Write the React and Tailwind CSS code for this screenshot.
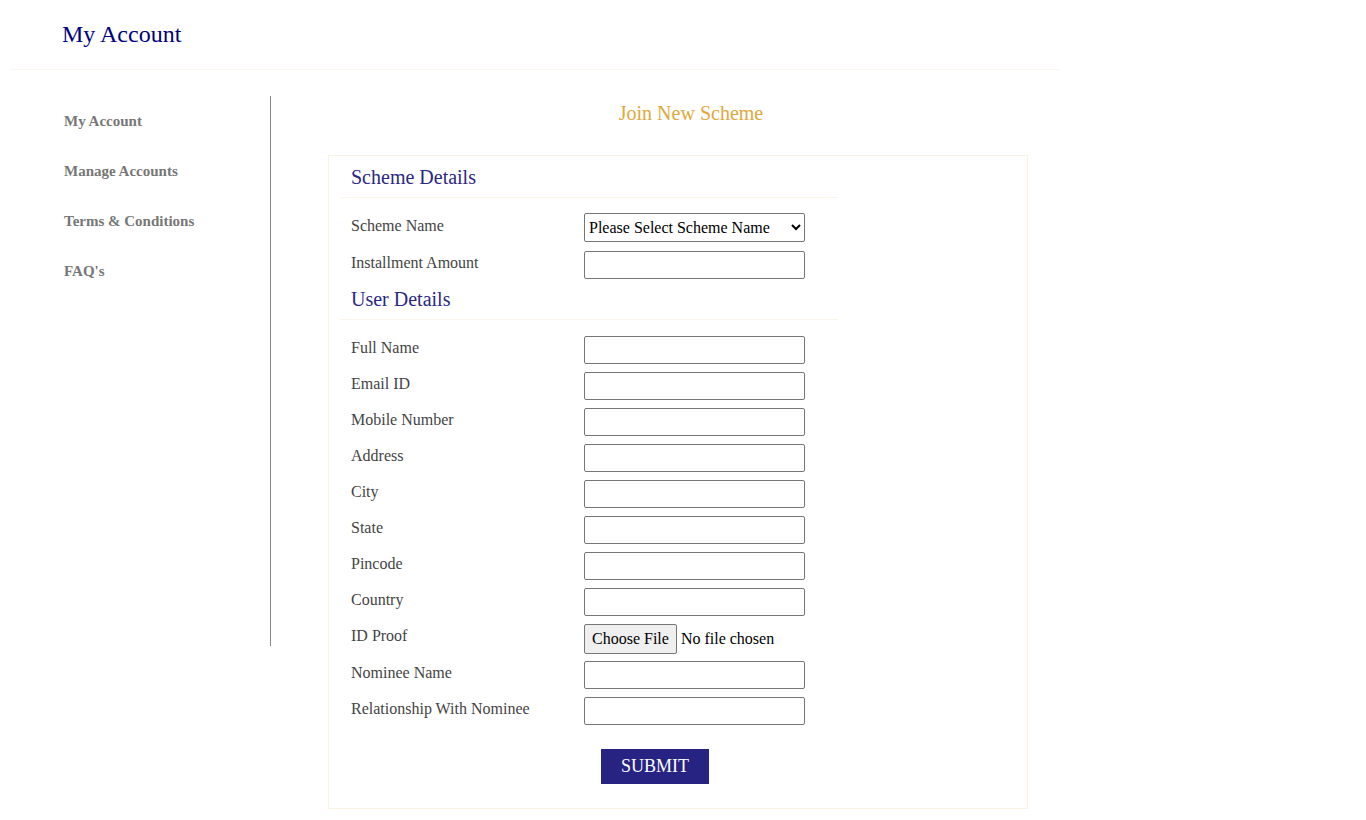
const schemeFields = ['Installment Amount'];
const userFields = [
  'Full Name',
  'Email ID',
  'Mobile Number',
  'Address',
  'City',
  'State',
  'Pincode',
  'Country',
];

function Row({ label, children }) {
  return (
    <div className="flex items-start h-[36px]">
      <label className="w-[244px] pl-[11px] text-[16px] leading-[24px] text-[#444]">{label}</label>
      {children}
    </div>
  );
}

function TextInput() {
  return (
    <input
      type="text"
      className="w-[221px] h-[28px] border border-[#767676] rounded-[2px] bg-white px-1 text-[16px] outline-none"
    />
  );
}

function Heading({ children }) {
  return (
    <div className="border-b border-[#fbf4e8] w-[498px] pl-[11px] pb-[8px] mb-[16px]">
      <h3 className="text-[20px] text-[#2b2783] leading-[24px]">{children}</h3>
    </div>
  );
}

export default function App() {
  return (
    <div className="min-h-screen bg-white font-['Liberation_Serif','Times_New_Roman',serif]">
      <div className="w-[1050px] ml-[10px]">
        {/* Header */}
        <div className="h-[70px] border-b border-[#fbf6ec] pl-[52px] pt-[18px]">
          <h1 className="text-[24px] leading-[32px] text-[#000080]">My Account</h1>
        </div>

        <div className="flex mt-[26px]">
          {/* Sidebar */}
          <nav className="w-[261px] h-[550px] border-r border-[#888] pl-[54px] pt-[15px] flex flex-col gap-[30px]">
            {['My Account', 'Manage Accounts', 'Terms & Conditions', "FAQ's"].map((item) => (
              <a key={item} href="#" className="text-[15px] leading-[20px] font-bold text-[#777]">
                {item}
              </a>
            ))}
          </nav>

          {/* Content */}
          <div className="flex-1 pl-[57px]">
            <h2 className="text-[20px] leading-[24px] text-[#e0a83d] text-center w-[726px] mt-[5px]">
              Join New Scheme
            </h2>

            <form className="mt-[30px] w-[700px] border border-[#faf2e4] pl-[11px] pt-[9px] pb-[24px]">
              <Heading>Scheme Details</Heading>
              <Row label="Scheme Name">
                <select className="w-[221px] h-[29px] -mt-[1px] border border-[#767676] rounded-[2px] bg-white text-[16px] text-black pl-0">
                  <option>Please Select Scheme Name</option>
                </select>
              </Row>
              <div className="mt-[1px]">
                {schemeFields.map((f) => (
                  <Row key={f} label={f}>
                    <TextInput />
                  </Row>
                ))}
              </div>

              <Heading>User Details</Heading>
              {userFields.map((f) => (
                <Row key={f} label={f}>
                  <TextInput />
                </Row>
              ))}
              <Row label="ID Proof">
                <div className="flex items-center gap-[4px] h-[30px]">
                  <span className="h-[30px] px-[7px] flex items-center border border-[#767676] rounded-[2px] bg-[#efefef] text-[16px] text-black">
                    Choose File
                  </span>
                  <span className="text-[16px] text-black">No file chosen</span>
                </div>
              </Row>
              <div className="mt-[1px]">
                <Row label="Nominee Name">
                  <TextInput />
                </Row>
                <Row label="Relationship With Nominee">
                  <TextInput />
                </Row>
              </div>

              <div className="flex pl-[261px] mt-[16px]">
                <button
                  type="button"
                  className="w-[108px] h-[35px] bg-[#262383] text-white text-[18px] uppercase"
                >
                  Submit
                </button>
              </div>
            </form>
          </div>
        </div>
      </div>
    </div>
  );
}
